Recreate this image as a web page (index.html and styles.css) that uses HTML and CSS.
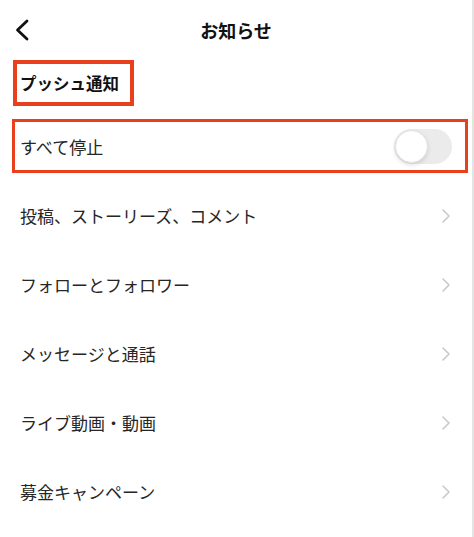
FILE: index.html
```html
<!DOCTYPE html>
<html lang="ja">
<head>
    <meta charset="UTF-8">
    <meta name="viewport" content="width=device-width, initial-scale=1.0">
    <title>お知らせ</title>
    <link rel="stylesheet" href="styles.css">
</head>
<body>
    <div class="screen">
        <header class="top-bar">
            <svg class="back-icon" width="16" height="22" viewBox="0 0 16 22">
                <path d="M13 2 L3.5 11 L13 20" fill="none" stroke="#111" stroke-width="2.8" stroke-linecap="round" stroke-linejoin="round"/>
            </svg>
            <h1 class="title">お知らせ</h1>
        </header>

        <div class="section-head">プッシュ通知</div>

        <div class="stop-all">
            <span class="row-label">すべて停止</span>
            <div class="toggle"><div class="knob"></div></div>
        </div>

        <ul class="menu">
            <li class="menu-row">
                <span class="row-label">投稿、ストーリーズ、コメント</span>
                <svg class="chevron" width="10" height="16" viewBox="0 0 10 16"><path d="M2 2 L8 8 L2 14" fill="none" stroke="#c9c9c9" stroke-width="1.6" stroke-linecap="round" stroke-linejoin="round"/></svg>
            </li>
            <li class="menu-row">
                <span class="row-label">フォローとフォロワー</span>
                <svg class="chevron" width="10" height="16" viewBox="0 0 10 16"><path d="M2 2 L8 8 L2 14" fill="none" stroke="#c9c9c9" stroke-width="1.6" stroke-linecap="round" stroke-linejoin="round"/></svg>
            </li>
            <li class="menu-row">
                <span class="row-label">メッセージと通話</span>
                <svg class="chevron" width="10" height="16" viewBox="0 0 10 16"><path d="M2 2 L8 8 L2 14" fill="none" stroke="#c9c9c9" stroke-width="1.6" stroke-linecap="round" stroke-linejoin="round"/></svg>
            </li>
            <li class="menu-row">
                <span class="row-label">ライブ動画・動画</span>
                <svg class="chevron" width="10" height="16" viewBox="0 0 10 16"><path d="M2 2 L8 8 L2 14" fill="none" stroke="#c9c9c9" stroke-width="1.6" stroke-linecap="round" stroke-linejoin="round"/></svg>
            </li>
            <li class="menu-row">
                <span class="row-label">募金キャンペーン</span>
                <svg class="chevron" width="10" height="16" viewBox="0 0 10 16"><path d="M2 2 L8 8 L2 14" fill="none" stroke="#c9c9c9" stroke-width="1.6" stroke-linecap="round" stroke-linejoin="round"/></svg>
            </li>
        </ul>
    </div>
</body>
</html>
```

FILE: styles.css
```css
* {
    margin: 0;
    padding: 0;
    box-sizing: border-box;
}

body {
    font-family: "Noto Sans CJK JP", "Noto Sans", sans-serif;
    background: #ffffff;
    color: #262626;
}

.screen {
    width: 474px;
    height: 537px;
    border-right: 2px solid #e4e4e4;
    overflow: hidden;
}

.top-bar {
    position: relative;
    height: 60px;
    display: flex;
    align-items: center;
    justify-content: center;
}

.back-icon {
    position: absolute;
    left: 14px;
    top: 19px;
}

.title {
    font-size: 18px;
    font-weight: bold;
    color: #111;
}

.section-head {
    margin-left: 13px;
    width: 121px;
    height: 46px;
    border: 4px solid #e8401c;
    display: flex;
    align-items: center;
    padding-left: 3px;
    font-size: 16.5px;
    font-weight: bold;
    color: #111;
}

.stop-all {
    margin: 13px 4px 0 12px;
    height: 54px;
    border: 3px solid #e8401c;
    display: flex;
    align-items: center;
    justify-content: space-between;
    padding: 0 13px 0 5px;
}

.row-label {
    font-size: 17px;
    color: #262626;
}

.toggle {
    width: 58px;
    height: 35px;
    border-radius: 18px;
    background: #ebebeb;
    padding: 1px;
}

.knob {
    width: 33px;
    height: 33px;
    border-radius: 50%;
    background: #fff;
    border: 1px solid #e2e2e2;
    box-shadow: 0 2px 4px rgba(0, 0, 0, 0.12);
}

.menu {
    list-style: none;
    margin-top: 8px;
}

.menu-row {
    height: 69px;
    display: flex;
    align-items: center;
    justify-content: space-between;
    padding: 0 21px 0 20px;
}
```
